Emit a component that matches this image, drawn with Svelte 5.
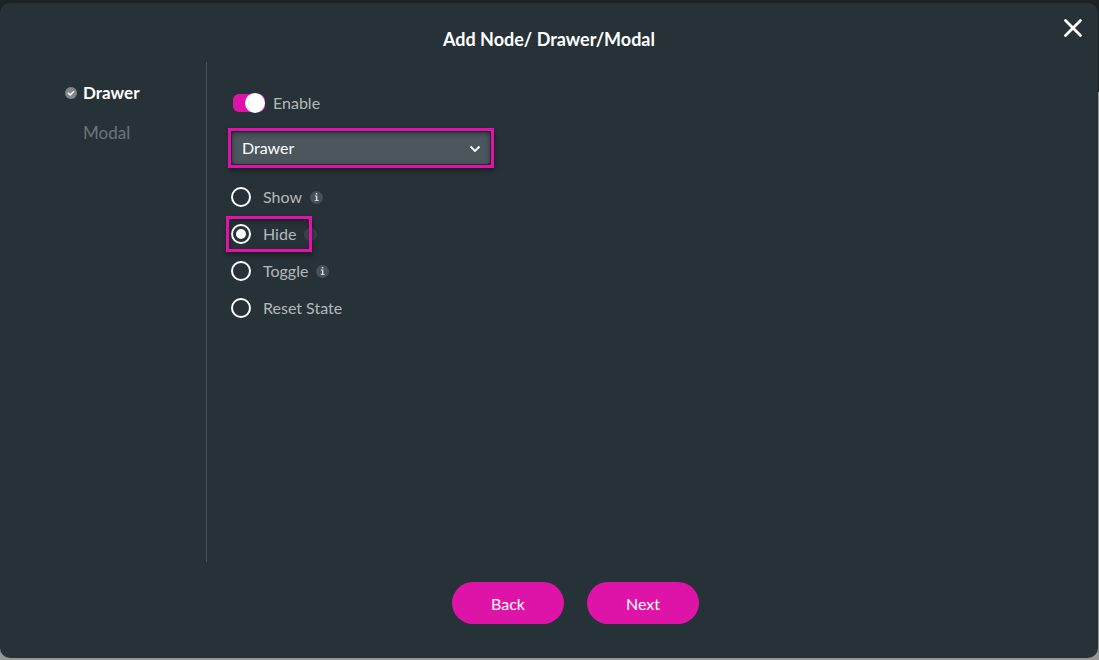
<script lang="ts">
  type Action = { id: string; label: string; hint?: string };

  const steps = [
    { label: "Drawer", active: true },
    { label: "Modal", active: false }
  ];

  const actions: Action[] = [
    { id: "show", label: "Show", hint: "Show the drawer" },
    { id: "hide", label: "Hide", hint: "Hide the drawer" },
    { id: "toggle", label: "Toggle", hint: "Toggle the drawer" },
    { id: "reset", label: "Reset State" }
  ];

  let enabled = $state(true);
  let target = $state("Drawer");
  let action = $state("hide");
</script>

<div class="backdrop">
  <div class="dialog" role="dialog" aria-modal="true" aria-labelledby="dialog-title">
    <header>
      <h1 id="dialog-title">Add Node/ Drawer/Modal</h1>
      <button class="close" type="button" aria-label="Close">
        <svg width="20" height="20" viewBox="0 0 20 20" aria-hidden="true">
          <path d="M2.5 2.5 17.5 17.5M17.5 2.5 2.5 17.5" fill="none" stroke="#fff" stroke-width="2.8" stroke-linecap="round" />
        </svg>
      </button>
    </header>

    <div class="content">
      <nav aria-label="Steps">
        {#each steps as step}
          <a href="#{step.label.toLowerCase()}" class:active={step.active}>
            <span class="mark">
              {#if step.active}
                <svg width="12" height="12" viewBox="0 0 12 12" aria-hidden="true">
                  <circle cx="6" cy="6" r="6" fill="#7f868a" />
                  <path d="M3 5.9 5.2 8 9 4.2" fill="none" stroke="#fff" stroke-width="1.5" />
                </svg>
              {/if}
            </span>
            {step.label}
          </a>
        {/each}
      </nav>

      <main>
        <label class="switch">
          <input type="checkbox" role="switch" bind:checked={enabled} />
          Enable
        </label>

        <div class="select-frame">
          <select aria-label="Component" bind:value={target}>
            <option>Drawer</option>
            <option>Modal</option>
          </select>
          <svg width="12" height="8" viewBox="0 0 12 8" aria-hidden="true">
            <path d="M1.5 1.5 6 6 10.5 1.5" fill="none" stroke="#fff" stroke-width="1.8" />
          </svg>
        </div>

        <div class="actions" role="radiogroup" aria-label="Action">
          {#each actions as item}
            <div class="action" class:highlighted={item.id === "hide"}>
              <label>
                <input type="radio" name="action" value={item.id} bind:group={action} />
                {item.label}
              </label>
              {#if item.hint}
                <svg class="info" width="13" height="13" viewBox="0 0 13 13" role="img" aria-label={item.hint}>
                  <circle cx="6.5" cy="6.5" r="6.5" fill="#465157" />
                  {#if item.id !== "hide"}
                    <path d="M5.7 2h1.6v1.5H5.7zM4.7 4.6h2.7v4.5h1.2v.9H4.7v-.9h1.2V5.5H4.7z" fill="#d5d8d9" />
                  {/if}
                </svg>
              {/if}
            </div>
          {/each}
        </div>
      </main>
    </div>

    <footer>
      <button type="button">Back</button>
      <button type="button">Next</button>
    </footer>
  </div>
</div>

<style>
  :global(body) {
    background: #979797;
  }

  .backdrop {
    box-sizing: border-box;
    display: flex;
    min-height: 100vh;
    padding: 3px 1px 2px 0;
    background: linear-gradient(#1b2326 92px, #979797 92px);
    font-family: Lato, sans-serif;
  }

  .dialog {
    position: relative;
    display: flex;
    flex: 1;
    flex-direction: column;
    border-radius: 10px;
    background: #273238;
    color: #fff;
  }

  header {
    display: flex;
    justify-content: center;
    height: 59px;
  }

  h1 {
    margin: 24px 0 0;
    font-size: 18px;
    font-weight: 700;
    line-height: 24px;
  }

  .close {
    position: absolute;
    top: 15px;
    right: 15px;
    display: flex;
    padding: 0;
    border: 0;
    background: none;
  }

  .content {
    display: flex;
    flex: 1;
  }

  nav {
    display: flex;
    flex: 0 0 141px;
    flex-direction: column;
    gap: 16px;
    border-right: 1px solid #465056;
    padding: 19px 0 0 65px;
  }

  nav a {
    display: flex;
    align-items: center;
    gap: 6px;
    color: #6c7478;
    font-size: 17px;
    line-height: 24px;
    text-decoration: none;
  }

  nav a.active {
    color: #fff;
    font-weight: 700;
  }

  .mark {
    display: flex;
    width: 12px;
  }

  main {
    display: flex;
    flex: 1;
    flex-direction: column;
    align-items: flex-start;
    padding: 31px 20px 0 21px;
    color: #b4b8ba;
    font-size: 16px;
    line-height: 20px;
  }

  .switch {
    display: flex;
    align-items: center;
    gap: 8px;
    margin-left: 5px;
  }

  .switch input {
    position: relative;
    width: 32px;
    height: 18px;
    margin: 0;
    border-radius: 6px;
    background: #5b666b;
    appearance: none;
  }

  .switch input::after {
    position: absolute;
    top: -1px;
    left: 0;
    width: 20px;
    height: 20px;
    border-radius: 50%;
    background: #fff;
    content: "";
  }

  .switch input:checked {
    background: #de14a9;
  }

  .switch input:checked::after {
    left: 12px;
  }

  .select-frame {
    position: relative;
    box-sizing: border-box;
    width: 266px;
    max-width: 100%;
    margin-top: 15px;
    border: 3px solid #e012ab;
    padding: 1px;
    box-shadow: 1px 3px 5px rgba(0, 0, 0, 0.4), inset 0 0 3px rgba(0, 0, 0, 0.5);
  }

  select {
    display: block;
    width: 100%;
    height: 32px;
    border: 0;
    border-radius: 4px;
    padding: 0 30px 0 10px;
    background: #4b575d;
    box-shadow: inset 0 2px 5px rgba(20, 28, 32, 0.5);
    color: #fff;
    font: 16px/20px Lato, sans-serif;
    appearance: none;
  }

  .select-frame svg {
    position: absolute;
    top: 14px;
    right: 10px;
    pointer-events: none;
  }

  .actions {
    display: flex;
    flex-direction: column;
    align-items: flex-start;
    gap: 17px;
    margin: 19px 0 0 3px;
  }

  .action {
    position: relative;
    display: flex;
    align-items: center;
    gap: 8px;
  }

  .action label {
    display: flex;
    align-items: center;
    gap: 12px;
  }

  .action.highlighted::after {
    position: absolute;
    inset: -8px 5px -8px -5px;
    border: 3px solid #e012ab;
    box-shadow: 1px 3px 5px rgba(0, 0, 0, 0.4), inset 1px 2px 4px rgba(0, 0, 0, 0.4);
    content: "";
    pointer-events: none;
  }

  .highlighted .info {
    opacity: 0.6;
  }

  .action input {
    display: grid;
    width: 20px;
    height: 20px;
    margin: 0;
    border: 2px solid #fff;
    border-radius: 50%;
    place-items: center;
    appearance: none;
  }

  .action input:checked::before {
    width: 10px;
    height: 10px;
    border-radius: 50%;
    background: #fff;
    content: "";
  }

  footer {
    display: flex;
    justify-content: center;
    gap: 23px;
    padding: 20px 0 34px 53px;
  }

  footer button {
    width: 112px;
    height: 42px;
    border: 0;
    border-radius: 21px;
    padding: 2px 0 0;
    background: #de14a9;
    color: #fff;
    font: 16px/20px Lato, sans-serif;
  }
</style>
